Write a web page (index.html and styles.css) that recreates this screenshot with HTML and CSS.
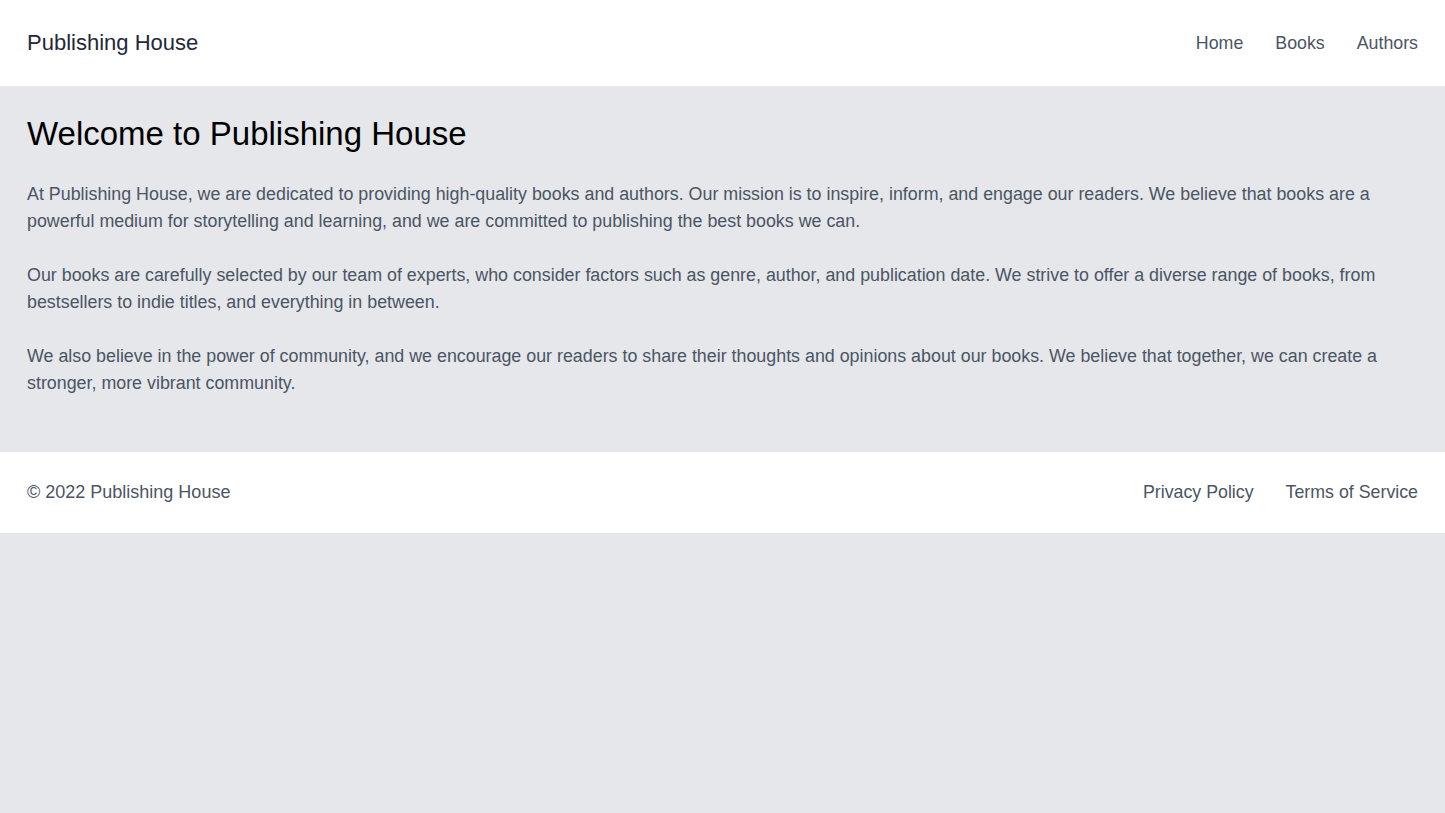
FILE: index.html
```html
<!DOCTYPE html>
<html lang="en">
<head>
<meta charset="utf-8">
<title>Publishing House</title>
<link rel="stylesheet" href="styles.css">
</head>
<body>
<header class="site-header">
  <div class="brand">Publishing House</div>
  <nav class="nav">
    <a href="#">Home</a>
    <a href="#">Books</a>
    <a href="#">Authors</a>
  </nav>
</header>
<main class="main">
  <h1 class="title">Welcome to Publishing House</h1>
  <p class="para">At Publishing House, we are dedicated to providing high-quality books and authors. Our mission is to inspire, inform, and engage our readers. We believe that books are a powerful medium for storytelling and learning, and we are committed to publishing the best books we can.</p>
  <p class="para">Our books are carefully selected by our team of experts, who consider factors such as genre, author, and publication date. We strive to offer a diverse range of books, from bestsellers to indie titles, and everything in between.</p>
  <p class="para">We also believe in the power of community, and we encourage our readers to share their thoughts and opinions about our books. We believe that together, we can create a stronger, more vibrant community.</p>
</main>
<footer class="site-footer">
  <div class="copy">© 2022 Publishing House</div>
  <nav class="nav">
    <a href="#">Privacy Policy</a>
    <a href="#">Terms of Service</a>
  </nav>
</footer>
</body>
</html>
```
FILE: styles.css
```css
* { box-sizing: border-box; }
html, body { margin: 0; padding: 0; }
body {
  background: #e5e7eb;
  font-family: "Liberation Sans", Arial, sans-serif;
  color: #4b5563;
}
a { color: inherit; text-decoration: none; }
.site-header {
  background: #fff;
  height: 86px;
  padding: 0 27px;
  display: flex;
  align-items: center;
  justify-content: space-between;
}
.brand {
  font-size: 22px;
  line-height: 28px;
  color: #1f2937;
}
.nav {
  display: flex;
  gap: 32px;
  font-size: 17.8px;
  line-height: 27px;
  color: #4b5563;
}
.main {
  padding: 30px 27px 40px;
  height: 366px;
}
.title {
  margin: 0 0 29px;
  font-size: 33px;
  line-height: 36px;
  font-weight: 400;
  color: #000;
}
.para {
  margin: 0 0 27px;
  font-size: 17.85px;
  line-height: 27px;
  color: #4b5563;
}
.site-footer {
  background: #fff;
  height: 81px;
  padding: 0 27px;
  display: flex;
  align-items: center;
  justify-content: space-between;
}
.copy {
  font-size: 18px;
  line-height: 27px;
}
```
